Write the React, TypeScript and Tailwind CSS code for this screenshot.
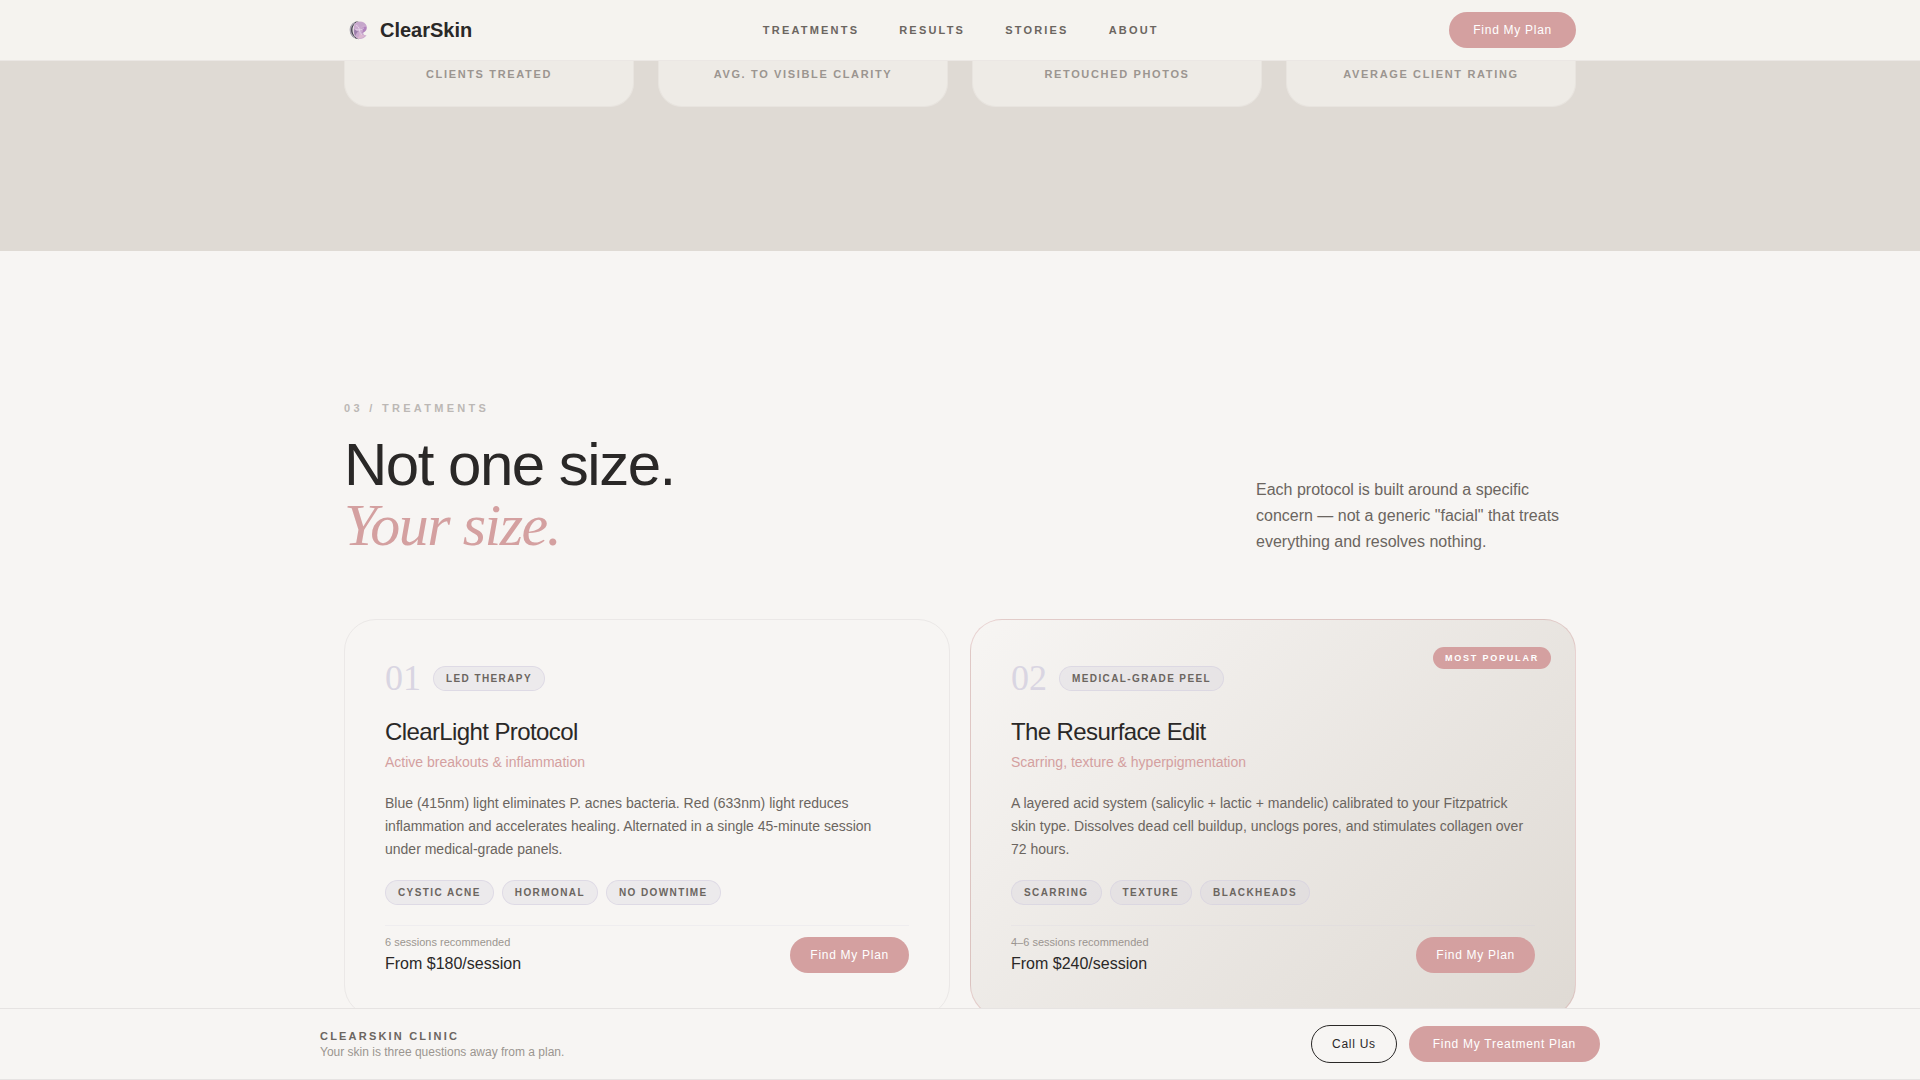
import React from 'react';

interface Treatment {
  id: string;
  badge: string;
  title: string;
  concern: string;
  description: string;
  tags: string[];
  sessions: string;
  price: string;
  popular?: boolean;
}

const navLinks = ['Treatments', 'Results', 'Stories', 'About'];

const stats = ['Clients treated', 'Avg. to visible clarity', 'Retouched photos', 'Average client rating'];

const treatments: Treatment[] = [
  {
    id: '01',
    badge: 'LED Therapy',
    title: 'ClearLight Protocol',
    concern: 'Active breakouts & inflammation',
    description:
      'Blue (415nm) light eliminates P. acnes bacteria. Red (633nm) light reduces inflammation and accelerates healing. Alternated in a single 45-minute session under medical-grade panels.',
    tags: ['Cystic Acne', 'Hormonal', 'No Downtime'],
    sessions: '6 sessions recommended',
    price: 'From $180/session',
  },
  {
    id: '02',
    badge: 'Medical-Grade Peel',
    title: 'The Resurface Edit',
    concern: 'Scarring, texture & hyperpigmentation',
    description:
      'A layered acid system (salicylic + lactic + mandelic) calibrated to your Fitzpatrick skin type. Dissolves dead cell buildup, unclogs pores, and stimulates collagen over 72 hours.',
    tags: ['Scarring', 'Texture', 'Blackheads'],
    sessions: '4–6 sessions recommended',
    price: 'From $240/session',
    popular: true,
  },
];

const Logo = () => (
  <svg viewBox="0 0 28 28" className="size-7" aria-hidden="true">
    <path d="M15 5A9.100 9.100 0 0 0 15 23.200C10.500 21 8.500 18 8.500 14.100C8.500 10 10.500 7 15 5Z" fill="#45434e" />
    <path d="M11 6.600A8.400 8.400 0 0 0 11 21.600" stroke="#a8a3b0" strokeWidth="1.400" fill="none" />
    <path d="M12 6.500C16 4.400 21 5.600 22.600 9.800C23.300 12.500 22.800 15 20 16.300C18.500 17 19.500 19.500 22.600 19.300C20.500 22.800 16 23.600 12.800 22.300C10.300 20.500 9.300 17 9.500 13.800C9.700 10.800 10.200 8 12 6.500Z" fill="#cbaacf" />
    <path d="M12.500 6.800C16 5.200 20.500 6.300 22.200 9.800C19.500 8.700 17.300 9.700 16.300 12.200C15.500 9.700 14.300 8 12.500 6.800Z" fill="#c5a6cb" />
    <path d="M22.300 10.800C23 14 20.500 17 17.500 16.600C19.500 15.800 19.300 13.500 17.500 12.500C19 11.300 20.800 10.600 22.300 10.800Z" fill="#b183bd" />
    <path d="M21 19.600C19 22.400 15.800 22.900 13 21.800C15.300 21 15.900 18.800 15.200 16.800C17 18.600 19 19.600 21 19.600Z" fill="#dcb9d1" />
    <path d="M11.500 20C9.800 17.500 9.600 14.500 11 12C11 14.300 12.500 15.600 14.800 15.100C13 16.500 11.900 18.200 11.500 20Z" fill="#9b7eaa" />
    <path d="M12 9.500C14 10 15 11.500 15.400 13.800C17 13.900 18.500 13.200 19.800 12M15.400 13.800C15.600 16 16.500 17.600 18 18.700M15.400 13.800C13.800 14 12 13.800 10.800 12.800" stroke="#eddff0" strokeWidth="0.700" fill="none" />
  </svg>
);

const PinkButton: React.FC<{ label: string; className: string }> = ({ label, className }) => (
  <button className={`h-9 rounded-full bg-[#d4a0a0] text-xs tracking-[0.06em] text-white ${className}`}>{label}</button>
);

const Pill: React.FC<{ text: string }> = ({ text }) => (
  <span className="rounded-full border border-[#d4cfdf]/60 bg-[#d4cfdf]/30 px-3 py-1 text-[10px] leading-[15px] font-bold tracking-[0.14em] text-[#6b6560] uppercase">
    {text}
  </span>
);

const TreatmentCard: React.FC<{ item: Treatment }> = ({ item }) => (
  <article
    className={`relative rounded-[32px] border p-10 ${
      item.popular
        ? 'border-[#d4a0a0]/40 bg-linear-135 from-[#f7f5f3] to-[#dfdad4]'
        : 'border-[#ebe8e7] bg-[#f7f5f3]'
    }`}
  >
    {item.popular && (
      <span className="absolute top-[27px] right-6 rounded-full bg-[#d4a0a0] px-3 py-1 text-[9px] leading-[14px] font-bold tracking-[0.2em] text-white uppercase">
        Most Popular
      </span>
    )}
    <div className="flex items-center gap-3">
      <span className="font-['Liberation_Serif',serif] text-4xl leading-none text-[#d9d5e2]">{item.id}</span>
      <Pill text={item.badge} />
    </div>
    <h3 className="mt-5 text-2xl tracking-tight text-[#2a2827]">{item.title}</h3>
    <p className="mt-1 text-sm text-[#d4a0a0]">{item.concern}</p>
    <p className="mt-5 text-sm leading-relaxed text-[#6b6560]">{item.description}</p>
    <div className="mt-5 flex flex-wrap gap-2">
      {item.tags.map((tag) => (
        <Pill key={tag} text={tag} />
      ))}
    </div>
    <div className="mt-5 flex items-center justify-between border-t border-[#d4cfdf]/20 pt-2">
      <div>
        <p className="text-[11px] leading-4 text-[#9b9590]">{item.sessions}</p>
        <p className="mt-0.5 text-base text-[#2a2827]">{item.price}</p>
      </div>
      <PinkButton label="Find My Plan" className="px-5" />
    </div>
  </article>
);

const App: React.FC = () => {
  return (
    <div className="h-screen overflow-hidden bg-[#f7f5f3] font-['Liberation_Sans',Arial,sans-serif] text-[#2a2827]">
      <header className="relative border-b border-[#ebe7e4] bg-[#f5f3ef]">
        <div className="mx-auto flex h-15 max-w-7xl items-center justify-between px-6">
          <a href="#" className="flex items-center gap-2 text-xl font-bold">
            <Logo />
            ClearSkin
          </a>
          <nav className="flex gap-10">
            {navLinks.map((link) => (
              <a key={link} href="#" className="text-[11px] font-bold tracking-[0.2em] text-[#6b6560] uppercase">
                {link}
              </a>
            ))}
          </nav>
          <PinkButton label="Find My Plan" className="px-6" />
        </div>
      </header>

      <main>
        <section className="bg-[#dfdad4] pb-36">
          <div className="mx-auto grid max-w-7xl grid-cols-4 gap-6 px-6">
            {stats.map((label) => (
              <div
                key={label}
                className="rounded-b-3xl border border-t-0 border-[#e8e4df] bg-[#eeebe6] px-6 pt-[5px] pb-6 text-center text-[11px] leading-4 font-bold tracking-[0.15em] text-[#9b9590] uppercase"
              >
                {label}
              </div>
            ))}
          </div>
        </section>

        <section className="mx-auto max-w-7xl px-6 pt-37">
          <div className="mb-16 flex items-end justify-between">
            <div>
              <p className="mb-4.5 text-[11px] leading-[18px] font-bold tracking-[0.3em] text-[#bcb8b5] uppercase">
                03 / Treatments
              </p>
              <h2 className="text-6xl leading-none tracking-tight">
                Not one size.
                <br />
                <em className="font-['Liberation_Serif',serif] text-[#d4a0a0]">Your size.</em>
              </h2>
            </div>
            <p className="w-80 text-base leading-[26px] text-[#6b6560]">
              Each protocol is built around a specific concern — not a generic "facial" that treats everything and
              resolves nothing.
            </p>
          </div>
          <div className="grid grid-cols-2 gap-5">
            {treatments.map((item) => (
              <TreatmentCard key={item.id} item={item} />
            ))}
          </div>
        </section>
      </main>

      <aside className="fixed inset-x-0 bottom-0 border-y border-[#e6e3e2] bg-[#f7f5f3] py-4">
        <div className="mx-auto flex max-w-7xl items-center justify-between">
          <div>
            <p className="text-[11px] leading-4 font-bold tracking-[0.2em] text-[#6b6560] uppercase">
              ClearSkin Clinic
            </p>
            <p className="text-xs text-[#9b9590]">Your skin is three questions away from a plan.</p>
          </div>
          <div className="flex items-center gap-3">
            <button className="h-[38px] rounded-full border border-[#2a2827] px-5 text-xs tracking-[0.06em]">
              Call Us
            </button>
            <PinkButton label="Find My Treatment Plan" className="px-6" />
          </div>
        </div>
      </aside>
    </div>
  );
};

export default App;
